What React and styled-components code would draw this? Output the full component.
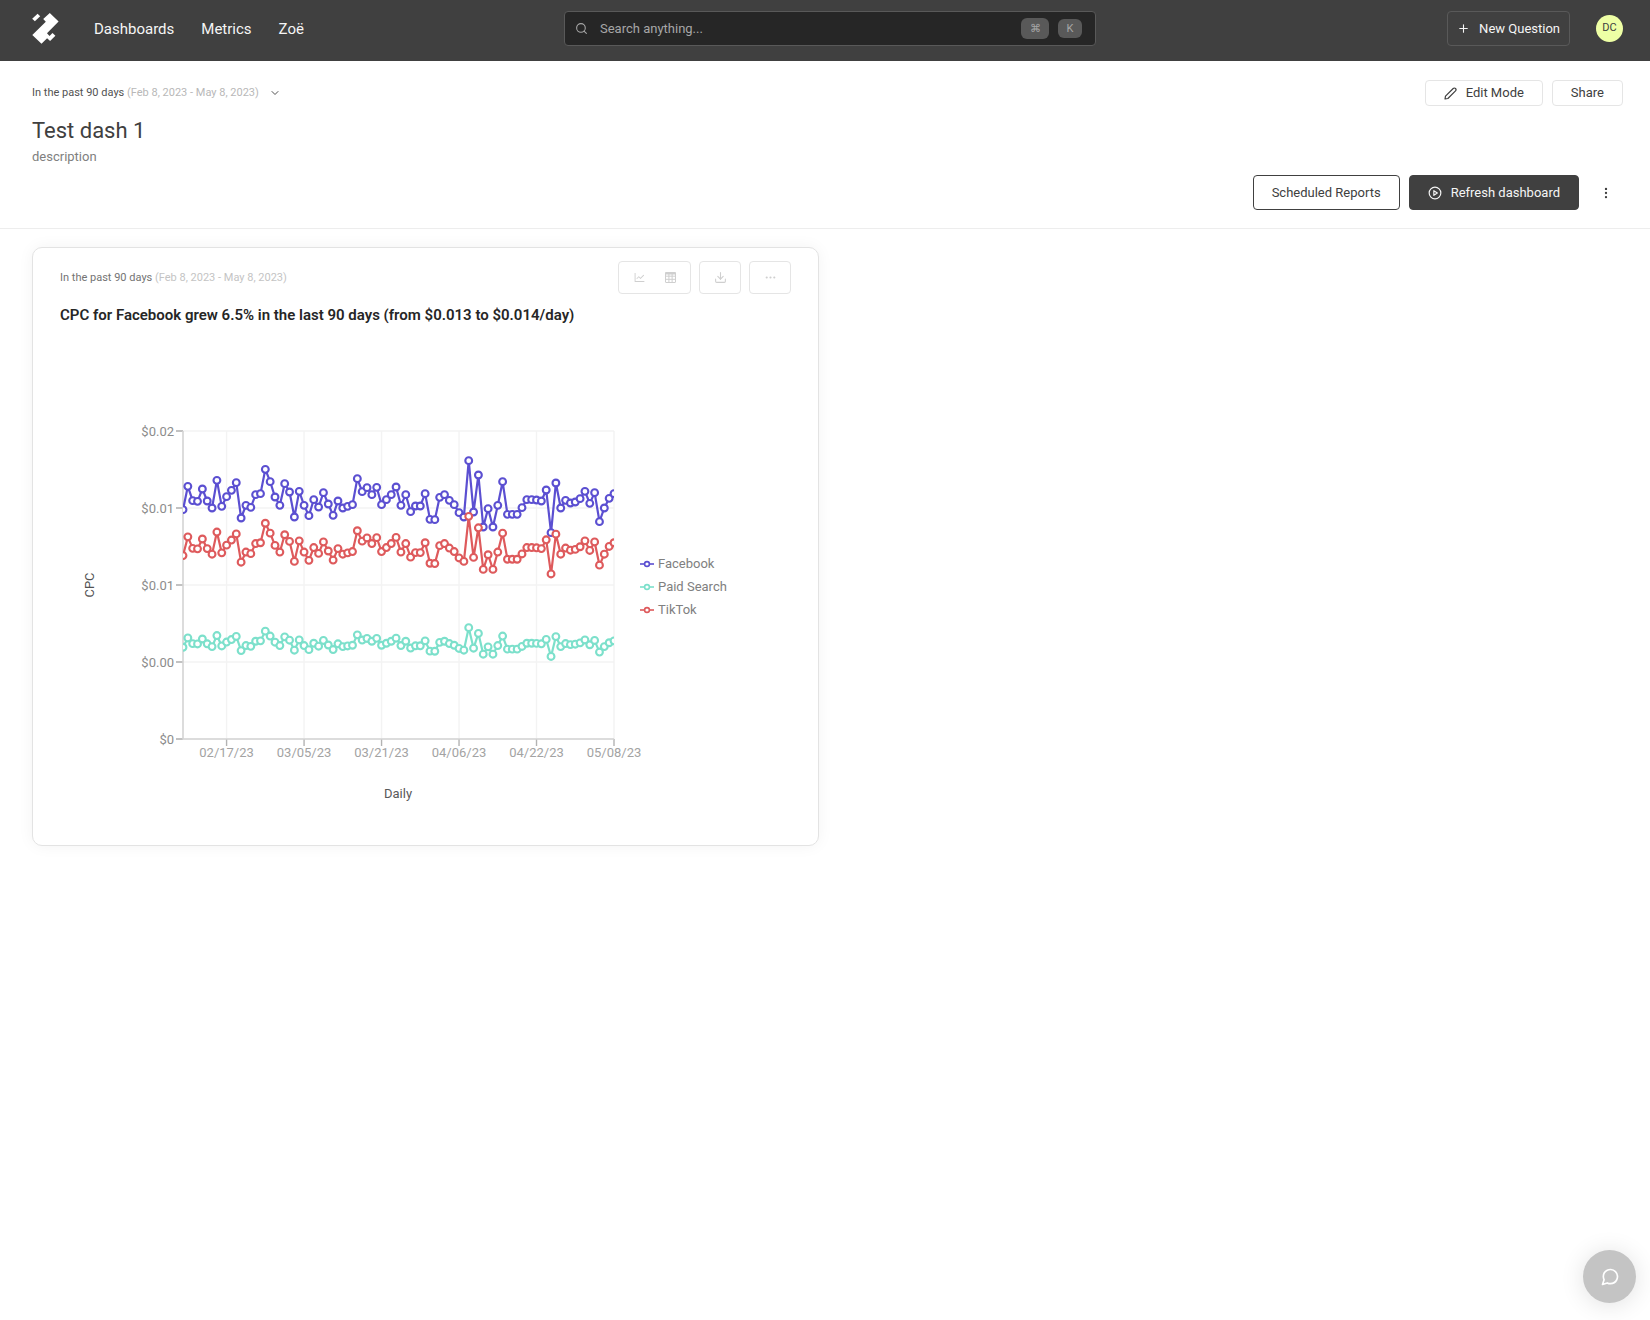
import React from 'react';
import styled, { createGlobalStyle, css } from 'styled-components';
import { FiSearch, FiPlus, FiChevronDown, FiPlayCircle, FiMessageCircle, FiMoreVertical, FiMoreHorizontal, FiDownload } from 'react-icons/fi';
import { AiOutlineLineChart } from 'react-icons/ai';

const GlobalStyle = createGlobalStyle`
  *, *::before, *::after { box-sizing: border-box; }
  body {
    margin: 0;
    background: #fff;
    color: #404040;
    font-family: Roboto, "Liberation Sans", sans-serif;
    font-size: 13px;
    line-height: 20px;
  }
  button, input { font: inherit; color: inherit; }
`;

const Header = styled.header`
  display: grid;
  grid-template-columns: 532fr 532fr 527fr;
  align-items: center;
  height: 61px;
  padding: 0 27px 4px 32px;
  background: #404040;
  color: #f5f5f5;
`;

const Nav = styled.nav`
  display: flex;
  align-items: center;
  gap: 27px;
  font-size: 15px;
`;

const LogoLink = styled.a`
  display: flex;
  margin-right: 8px;
  color: #fff;
`;

const NavLink = styled.a`
  color: inherit;
  text-decoration: none;
`;

const SearchBox = styled.label`
  display: flex;
  align-items: center;
  gap: 9px;
  height: 35px;
  padding: 0 13px 0 10px;
  border: 1px solid #595959;
  border-radius: 4px;
  background: #262626;
  color: #a6a6a6;
`;

const SearchInput = styled.input`
  flex: 1;
  min-width: 0;
  padding: 0 3px;
  border: 0;
  outline: 0;
  background: transparent;
  &::placeholder { color: #a6a6a6; opacity: 1; }
`;

const Key = styled.kbd`
  display: inline-flex;
  align-items: center;
  justify-content: center;
  width: ${(p) => (p.$wide ? 28 : 24)}px;
  height: ${(p) => (p.$wide ? 21 : 19)}px;
  border-radius: 6px;
  background: #595959;
  color: #a6a6a6;
  font-family: inherit;
  font-size: 11px;
`;

const HeaderActions = styled.div`
  display: flex;
  align-items: center;
  justify-content: flex-end;
  gap: 26px;
`;

const Avatar = styled.button`
  width: 27px;
  height: 27px;
  padding: 0 0 2px;
  border: 0;
  border-radius: 50%;
  background: #eeffa5;
  color: #404040;
  font-size: 11px;
  line-height: 16px;
`;

const variants = {
  dark: css`
    height: 35px;
    padding: 0 9px;
    border-color: #595959;
    background: transparent;
    color: #f5f5f5;
  `,
  small: css`
    height: 26px;
    padding: 0 18px;
    border-color: #e5e5e5;
    background: #fff;
  `,
  outline: css`
    height: 35px;
    padding: 0 18px;
    border-color: #404040;
    background: #fff;
  `,
  solid: css`
    height: 35px;
    padding: 0 18px;
    border-color: #404040;
    background: #404040;
    color: #f5f5f5;
  `,
};

const Button = styled.button`
  display: inline-flex;
  align-items: center;
  gap: 9px;
  border: 1px solid;
  border-radius: 4px;
  white-space: nowrap;
  ${(p) => variants[p.$variant]}
`;

const BareButton = styled.button`
  display: inline-flex;
  align-items: center;
  justify-content: center;
  width: ${(p) => p.$width}px;
  padding: 0;
  border: 0;
  background: transparent;
`;

const DashHeader = styled.section`
  display: flex;
  flex-direction: column;
  padding: 19px 27px 18px 32px;
  border-bottom: 1px solid #ededed;
`;

const TopLine = styled.div`
  display: flex;
  justify-content: space-between;
  align-items: center;
  min-height: 26px;
`;

const Period = styled.div`
  display: flex;
  align-items: center;
  gap: 4px;
  font-size: 11px;
  line-height: 16px;
  color: ${(p) => (p.$soft ? '#737373' : '#525252')};
`;

const Dates = styled.span`
  color: ${(p) => (p.$soft ? '#c4c4c4' : '#b8b8b8')};
`;

const Actions = styled.div`
  display: flex;
  align-items: center;
  justify-content: flex-end;
  gap: 9px;
`;

const DashTitle = styled.h1`
  margin: 9px 0 0;
  font-size: 22px;
  line-height: 32px;
  font-weight: 400;
`;

const Description = styled.p`
  margin: 0 0 8px;
  color: #808080;
`;

const Board = styled.main`
  display: grid;
  grid-template-columns: repeat(2, minmax(0, 1fr));
  gap: 17px;
  padding: 18px 27px 32px 32px;
`;

const Card = styled.article`
  padding: 13px 27px 18px;
  border: 1px solid #e3e3e3;
  border-radius: 10px;
  background: #fff;
  box-shadow: 0 0 16px rgba(0, 0, 0, 0.05);
`;

const Tools = styled.div`
  display: flex;
  gap: 8px;
  color: #cfcfcf;
`;

const ToolGroup = styled.div`
  display: flex;
  align-items: center;
  justify-content: center;
  gap: 17px;
  height: 33px;
  padding: 0 ${(p) => (p.$double ? 13 : 12)}px;
  border: 1px solid #e5e5e5;
  border-radius: 4px;
`;

const CardTitle = styled.h2`
  margin: 9px 0 20px;
  color: #262626;
  font-size: 15px;
  line-height: 24px;
  font-weight: 600;
`;

const ChartRow = styled.div`
  display: flex;
  align-items: center;
`;

const Plot = styled.svg`
  display: block;
  flex: 0 1 580px;
  min-width: 0;
  height: auto;
  overflow: visible;
  font-size: 13px;
`;

const Legend = styled.ul`
  display: flex;
  flex-direction: column;
  gap: 3px;
  margin: 0;
  padding: 0;
  list-style: none;
  color: #808080;
`;

const LegendItem = styled.li`
  display: flex;
  align-items: center;
  gap: 4px;
  white-space: nowrap;
`;

const ChatButton = styled.button`
  position: fixed;
  right: 14px;
  bottom: 17px;
  display: flex;
  align-items: center;
  justify-content: center;
  width: 53px;
  height: 53px;
  padding: 0;
  border: 0;
  border-radius: 50%;
  background: #c4c4c4;
  color: #fff;
  box-shadow: 0 2px 24px rgba(0, 0, 0, 0.12);
`;

// Daily Facebook CPC, on a scale where 924 is the top of the axis.
const FACEBOOK = [
  688, 758, 715, 713, 750, 714, 693, 776, 698, 727, 746, 769, 663, 701, 695, 733, 736, 809,
  772, 726, 701, 766, 741, 666, 743, 701, 670, 718, 696, 739, 705, 671, 714, 693, 698, 703,
  781, 742, 754, 733, 755, 703, 718, 733, 756, 701, 733, 682, 699, 699, 736, 659, 658, 725,
  733, 716, 703, 679, 666, 835, 681, 792, 636, 691, 636, 701, 772, 674, 674, 674, 694, 718,
  718, 717, 714, 747, 619, 768, 693, 716, 708, 711, 721, 743, 707, 739, 652, 693, 722, 736,
];
const AXIS_MAX = 924;

const SERIES = [
  { name: 'Facebook', color: '#5b4fd1', ratio: 1 },
  { name: 'Paid Search', color: '#7ce0cb', ratio: 0.4 },
  { name: 'TikTok', color: '#de5a5c', ratio: 0.8 },
];
const Y_LABELS = ['$0', '$0.00', '$0.01', '$0.01', '$0.02'];
const X_TICKS = [
  [9, '02/17/23'],
  [25, '03/05/23'],
  [41, '03/21/23'],
  [57, '04/06/23'],
  [73, '04/22/23'],
  [89, '05/08/23'],
];

const PLOT = { left: 123, top: 84, width: 431, height: 308 };
const BOTTOM = PLOT.top + PLOT.height;
const RIGHT = PLOT.left + PLOT.width;
const xAt = (day) => PLOT.left + (day / (FACEBOOK.length - 1)) * PLOT.width;
const yAt = (value) => BOTTOM - (value / AXIS_MAX) * PLOT.height;

function Line({ color, ratio }) {
  const points = FACEBOOK.map((v, i) => [xAt(i), yAt(v * ratio)]);
  return (
    <g stroke={color} strokeWidth="2.2">
      <polyline fill="none" points={points.map((p) => p.join(',')).join(' ')} />
      {points.map(([x, y], i) => (
        <circle key={i} cx={x} cy={y} r="3.4" fill="#fff" strokeWidth="2.1" />
      ))}
    </g>
  );
}

function CpcChart() {
  return (
    <Plot viewBox="0 0 580 480" role="img" aria-label="Daily CPC by channel">
      <defs>
        <clipPath id="plot-area">
          <rect x={PLOT.left} y={PLOT.top} width={PLOT.width} height={PLOT.height} />
        </clipPath>
      </defs>
      <g stroke="#f3f3f3" strokeWidth="1.4">
        {Y_LABELS.map((_, i) => {
          const y = BOTTOM - (i * PLOT.height) / 4;
          return <line key={i} x1={PLOT.left} x2={RIGHT} y1={y} y2={y} />;
        })}
        {X_TICKS.map(([day]) => (
          <line key={day} x1={xAt(day)} x2={xAt(day)} y1={PLOT.top} y2={BOTTOM} />
        ))}
      </g>
      <g fill="#8c8c8c" textAnchor="end">
        {Y_LABELS.map((label, i) => {
          const y = BOTTOM - (i * PLOT.height) / 4;
          return (
            <g key={i}>
              <line x1={PLOT.left - 7} x2={PLOT.left} y1={y} y2={y} stroke="#b3b3b3" strokeWidth="1.6" />
              <text x={PLOT.left - 9} y={y + 5}>{label}</text>
            </g>
          );
        })}
      </g>
      <g fill="#a3a3a3" textAnchor="middle">
        {X_TICKS.map(([day, label]) => (
          <g key={day}>
            <line x1={xAt(day)} x2={xAt(day)} y1={BOTTOM} y2={BOTTOM + 7} stroke="#b3b3b3" strokeWidth="1.4" />
            <text x={xAt(day)} y={BOTTOM + 18}>{label}</text>
          </g>
        ))}
      </g>
      <path
        d={`M${PLOT.left} ${PLOT.top}V${BOTTOM}H${RIGHT}`}
        fill="none"
        stroke="#d4d4d4"
        strokeWidth="1.6"
      />
      <g clipPath="url(#plot-area)">
        {SERIES.map((s) => <Line key={s.name} {...s} />)}
      </g>
      <text transform="translate(34 238) rotate(-90)" textAnchor="middle" fill="#525252">CPC</text>
      <text x="338" y="451" textAnchor="middle" fill="#595959">Daily</text>
    </Plot>
  );
}

function LegendMark({ color }) {
  return (
    <svg width="14" height="10" viewBox="0 0 14 10" aria-hidden="true">
      <g stroke={color} strokeWidth="1.6">
        <path d="M0 5h14" />
        <circle cx="7" cy="5" r="2.4" fill="#fff" />
      </g>
    </svg>
  );
}

function Logo() {
  return (
    <svg width="27" height="31" viewBox="0 0 27 31" fill="currentColor" aria-hidden="true">
      <path d="M17.8 0 26.6 8.4 15 20.2l2.5 2.7 3-3 2.9 2.8-5.3 5.4-3-2.9-5.6 5.6L.3 22.1 13.8 8.7l-2.6-2.6Z" />
      <path d="M5.6.7 8.2 3.2 2.9 8.3.2 5.7Z" />
    </svg>
  );
}

function PencilIcon() {
  return (
    <svg width="13" height="13" viewBox="0 0 13 13" fill="none" stroke="currentColor" strokeWidth="1.2" strokeLinejoin="round" aria-hidden="true">
      <path d="M1 12l.5-2.9 7.7-7.6a1.6 1.6 0 0 1 2.3 2.3l-7.6 7.7L1 12Z" />
    </svg>
  );
}

function TableIcon() {
  return (
    <svg width="13" height="13" viewBox="0 0 13 13" fill="none" stroke="currentColor" aria-hidden="true">
      <rect x="1.5" y="1.5" width="10" height="10" rx="0.5" />
      <path d="M1 2.5h11" strokeWidth="2" />
      <path d="M1 5.2h11M1 8.3h11M4.9 2v9.5M8.1 2v9.5" />
    </svg>
  );
}

export default function App() {
  return (
    <>
      <GlobalStyle />
      <Header>
        <Nav>
          <LogoLink href="#home" aria-label="Home"><Logo /></LogoLink>
          <NavLink href="#dashboards">Dashboards</NavLink>
          <NavLink href="#metrics">Metrics</NavLink>
          <NavLink href="#zoe">Zoë</NavLink>
        </Nav>
        <SearchBox>
          <FiSearch size={13} aria-hidden="true" />
          <SearchInput type="text" placeholder="Search anything..." aria-label="Search anything" />
          <Key $wide>⌘</Key>
          <Key>K</Key>
        </SearchBox>
        <HeaderActions>
          <Button $variant="dark"><FiPlus size={13} />New Question</Button>
          <Avatar aria-label="Account DC">DC</Avatar>
        </HeaderActions>
      </Header>
      <DashHeader>
        <TopLine>
          <Period>
            <span>In the past 90 days <Dates>(Feb 8, 2023 - May 8, 2023)</Dates></span>
            <BareButton $width={24} aria-label="Change period"><FiChevronDown size={12} /></BareButton>
          </Period>
          <Actions>
            <Button $variant="small"><PencilIcon />Edit Mode</Button>
            <Button $variant="small">Share</Button>
          </Actions>
        </TopLine>
        <DashTitle>Test dash 1</DashTitle>
        <Description>description</Description>
        <Actions>
          <Button $variant="outline">Scheduled Reports</Button>
          <Button $variant="solid"><FiPlayCircle size={14} />Refresh dashboard</Button>
          <BareButton $width={35} aria-label="More actions"><FiMoreVertical size={14} /></BareButton>
        </Actions>
      </DashHeader>
      <Board>
        <Card>
          <TopLine>
            <Period $soft>
              <span>In the past 90 days <Dates $soft>(Feb 8, 2023 - May 8, 2023)</Dates></span>
            </Period>
            <Tools>
              <ToolGroup $double>
                <BareButton $width={14} aria-label="Show as chart"><AiOutlineLineChart size={13} /></BareButton>
                <BareButton $width={14} aria-label="Show as table"><TableIcon /></BareButton>
              </ToolGroup>
              <ToolGroup>
                <BareButton $width={16} aria-label="Download"><FiDownload size={13} /></BareButton>
              </ToolGroup>
              <ToolGroup>
                <BareButton $width={16} aria-label="More"><FiMoreHorizontal size={13} /></BareButton>
              </ToolGroup>
            </Tools>
          </TopLine>
          <CardTitle>CPC for Facebook grew 6.5% in the last 90 days (from $0.013 to $0.014/day)</CardTitle>
          <ChartRow>
            <CpcChart />
            <Legend>
              {SERIES.map((s) => (
                <LegendItem key={s.name}><LegendMark color={s.color} />{s.name}</LegendItem>
              ))}
            </Legend>
          </ChartRow>
        </Card>
      </Board>
      <ChatButton aria-label="Open chat"><FiMessageCircle size={20} /></ChatButton>
    </>
  );
}
